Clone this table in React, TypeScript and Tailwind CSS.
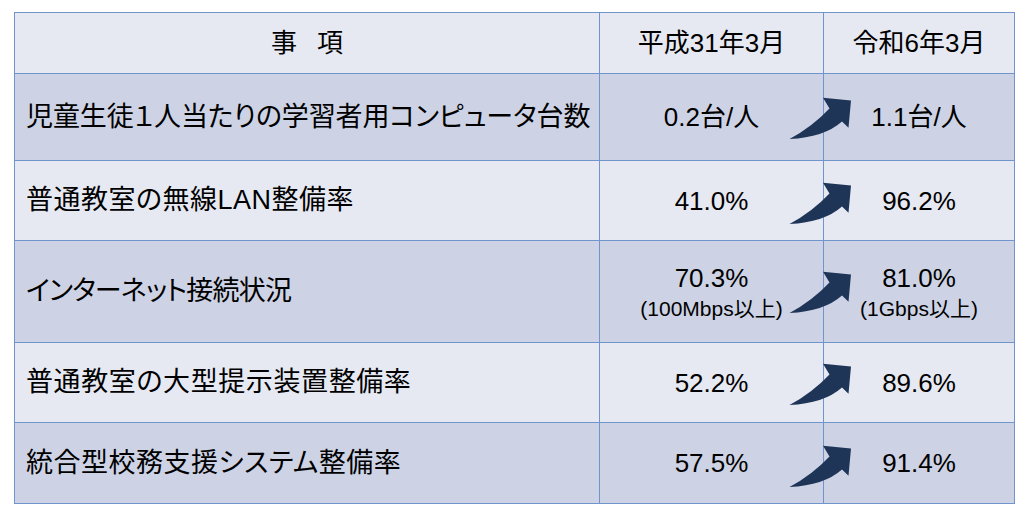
import React from "react";

const font = { fontFamily: '"Liberation Sans", "Noto Sans CJK JP", sans-serif' };

function Arrow({ top }: { top: number }) {
  return (
    <svg
      className="absolute pointer-events-none"
      style={{ left: -36, top }}
      width="66"
      height="46"
      viewBox="0 0 66 46"
    >
      <path
        d="M1.5 43 Q24 31 41.5 12.5 L35 1.8 L63 4.5 L60.5 31.8 L54 25.5 Q36 41.5 1.5 43 Z"
        fill="#1f3558"
      />
    </svg>
  );
}

type Row = {
  label: string;
  a: string;
  aSub?: string;
  b: string;
  bSub?: string;
  h: string;
  bg: string;
  tr: string;
  arrowTop: number;
};

const rows: Row[] = [
  { label: "児童生徒１人当たりの学習者用コンピュータ台数", a: "0.2台/人", b: "1.1台/人", h: "h-[87px]", bg: "bg-[#cdd3e5]", tr: "tracking-[-0.1px]", arrowTop: 22 },
  { label: "普通教室の無線LAN整備率", a: "41.0%", b: "96.2%", h: "h-[80px]", bg: "bg-[#e6e9f2]", tr: "tracking-[0.5px]", arrowTop: 20 },
  { label: "インターネット接続状況", a: "70.3%", aSub: "(100Mbps以上)", b: "81.0%", bSub: "(1Gbps以上)", h: "h-[102px]", bg: "bg-[#cdd3e5]", tr: "tracking-[-0.8px]", arrowTop: 29 },
  { label: "普通教室の大型提示装置整備率", a: "52.2%", b: "89.6%", h: "h-[80px]", bg: "bg-[#e6e9f2]", tr: "tracking-[0.6px]", arrowTop: 19 },
  { label: "統合型校務支援システム整備率", a: "57.5%", b: "91.4%", h: "h-[81px]", bg: "bg-[#cdd3e5]", tr: "tracking-[0.5px]", arrowTop: 21 },
];

function Value({ main, sub }: { main: string; sub?: string }) {
  return (
    <div className="flex flex-col items-center leading-none">
      <span className="text-[26px] leading-[30px]">{main}</span>
      {sub && <span className="text-[21px] leading-[22px] mt-[5px]">{sub}</span>}
    </div>
  );
}

export default function App() {
  return (
    <div className="w-[1034px] h-[516px] bg-white text-black" style={font}>
      <div className="pt-[12px] pl-[14px]">
        <div className="grid grid-cols-[585px_224px_191px] w-[1001px] border-l border-t border-[#7094cc]">
          {/* header */}
          <div className="h-[61px] bg-[#e6e9f2] border-r border-b border-[#7094cc] flex items-center justify-center text-[26px]">
            <span>事</span>
            <span className="ml-[20px]">項</span>
          </div>
          <div className="h-[61px] bg-[#e6e9f2] border-r border-b border-[#7094cc] flex items-center justify-center text-[26px]">
            平成31年3月
          </div>
          <div className="h-[61px] bg-[#e6e9f2] border-r border-b border-[#7094cc] flex items-center justify-center text-[26px]">
            令和6年3月
          </div>
          {rows.map((r, i) => (
            <React.Fragment key={i}>
              <div className={`${r.h} ${r.bg} ${r.tr} border-r border-b border-[#7094cc] flex items-center pl-[11px] text-[27px] whitespace-nowrap [font-feature-settings:'palt']`}>
                {r.label}
              </div>
              <div className={`${r.h} ${r.bg} border-r border-b border-[#7094cc] flex items-center justify-center`}>
                <Value main={r.a} sub={r.aSub} />
              </div>
              <div className={`${r.h} ${r.bg} relative border-r border-b border-[#7094cc] flex items-center justify-center`}>
                <Value main={r.b} sub={r.bSub} />
                <Arrow top={r.arrowTop} />
              </div>
            </React.Fragment>
          ))}
        </div>
      </div>
    </div>
  );
}
